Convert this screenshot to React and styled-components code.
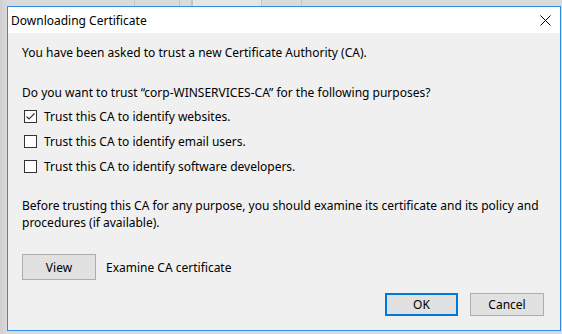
import React from "react";
import styled, { createGlobalStyle } from "styled-components";

const Global = createGlobalStyle`
    html, body {
        margin: 0;
        padding: 0;
    }
    body {
        width: 562px;
        height: 334px;
        overflow: hidden;
        background: linear-gradient(to right, #cfcfcf 0px, #dadada 7px, #dadada 100%);
        font-family: "Noto Sans", "Open Sans", sans-serif;
        font-size: 12px;
        color: #000;
    }
`

const Backdrop = styled.div`
    position: relative;
    width: 562px;
    height: 334px;
    padding: 6px 1px 3px 7px;
    box-sizing: border-box;
`
const TabStrip = styled.div`
    position: absolute;
    top: 0;
    left: 0;
    right: 0;
    height: 6px;
    display: flex;
    padding-left: 95px;
`
const Tab = styled.div`
    width: ${p => p.w}px;
    height: 6px;
    box-sizing: border-box;
    border-right: 1px solid #c4c4c4;
    background: ${p => p.active ? "#e6e6e6" : "transparent"};
    border-left: ${p => p.active ? "1px solid #c4c4c4" : "none"};
`

const Window = styled.div`
    position: relative;
    height: 100%;
    box-sizing: border-box;
    border: 1px solid #2b8de3;
    background: #f0f0f0;
    display: flex;
    flex-direction: column;
`
const TitleBar = styled.div`
    height: 26px;
    background: #fff;
    display: flex;
    align-items: center;
    justify-content: space-between;
    padding: 0 0 0 3px;
`
const Title = styled.span`
    font-size: 12px;
    line-height: 1;
    margin-top: 1px;
`
const CloseBtn = styled.div`
    width: 30px;
    height: 26px;
    display: flex;
    align-items: center;
    justify-content: center;
`
const Body = styled.div`
    flex: 1;
    padding: 11px 14px 0 14px;
    display: flex;
    flex-direction: column;
`
const Para = styled.p`
    margin: ${p => p.mt || 0}px 0 0 0;
    line-height: 17px;
    width: ${p => p.w ? p.w + "px" : "auto"};
`
const Options = styled.div`
    display: flex;
    flex-direction: column;
    gap: 8px;
    margin-top: 7px;
    padding-left: 2px;
`
const Option = styled.label`
    display: flex;
    align-items: center;
    gap: 7px;
    height: 17px;
    line-height: 17px;
`
const Box = styled.span`
    width: 13px;
    height: 13px;
    box-sizing: border-box;
    border: 1px solid #333;
    background: #fff;
    display: flex;
    align-items: center;
    justify-content: center;
`
const ViewRow = styled.div`
    display: flex;
    align-items: center;
    gap: 10px;
    margin-top: 23px;
`
const Button = styled.button`
    width: ${p => p.w}px;
    height: ${p => p.h}px;
    box-sizing: border-box;
    background: #e1e1e1;
    border: ${p => p.primary ? "2px solid #0078d7" : "1px solid #adadad"};
    font-family: inherit;
    font-size: 12px;
    color: #000;
    padding: 0;
`
const Footer = styled.div`
    display: flex;
    justify-content: flex-end;
    gap: 12px;
    margin-top: auto;
    padding: 0 2px 14px 0;
`

function CheckBox({ checked }) {
    return (
        <Box>
            {checked && (
                <svg width="11" height="11" viewBox="0 0 11 11">
                    <path d="M1.5 5.5 L4 8 L9.5 2.5" fill="none" stroke="#333" strokeWidth="1.2" />
                </svg>
            )}
        </Box>
    );
}

export default function App() {
    return (
        <>
            <Global />
            <Backdrop>
                <TabStrip>
                    <Tab w={40} />
                    <Tab w={45} />
                    <Tab w={12} />
                    <Tab w={70} active />
                    <Tab w={40} />
                </TabStrip>
                <Window>
                    <TitleBar>
                        <Title>Downloading Certificate</Title>
                        <CloseBtn>
                            <svg width="11" height="11" viewBox="0 0 11 11">
                                <path d="M0.5 0.5 L10.5 10.5 M10.5 0.5 L0.5 10.5" stroke="#000" strokeWidth="1" />
                            </svg>
                        </CloseBtn>
                    </TitleBar>
                    <Body>
                        <Para>You have been asked to trust a new Certificate Authority (CA).</Para>
                        <Para mt={23}>Do you want to trust “corp-WINSERVICES-CA” for the following purposes?</Para>
                        <Options>
                            <Option><CheckBox checked />Trust this CA to identify websites.</Option>
                            <Option><CheckBox />Trust this CA to identify email users.</Option>
                            <Option><CheckBox />Trust this CA to identify software developers.</Option>
                        </Options>
                        <Para mt={22} w={525}>Before trusting this CA for any purpose, you should examine its certificate and its policy and procedures (if available).</Para>
                        <ViewRow>
                            <Button w={74} h={26}>View</Button>
                            <span>Examine CA certificate</span>
                        </ViewRow>
                        <Footer>
                            <Button w={73} h={23} primary>OK</Button>
                            <Button w={74} h={23}>Cancel</Button>
                        </Footer>
                    </Body>
                </Window>
            </Backdrop>
        </>
    );
}
